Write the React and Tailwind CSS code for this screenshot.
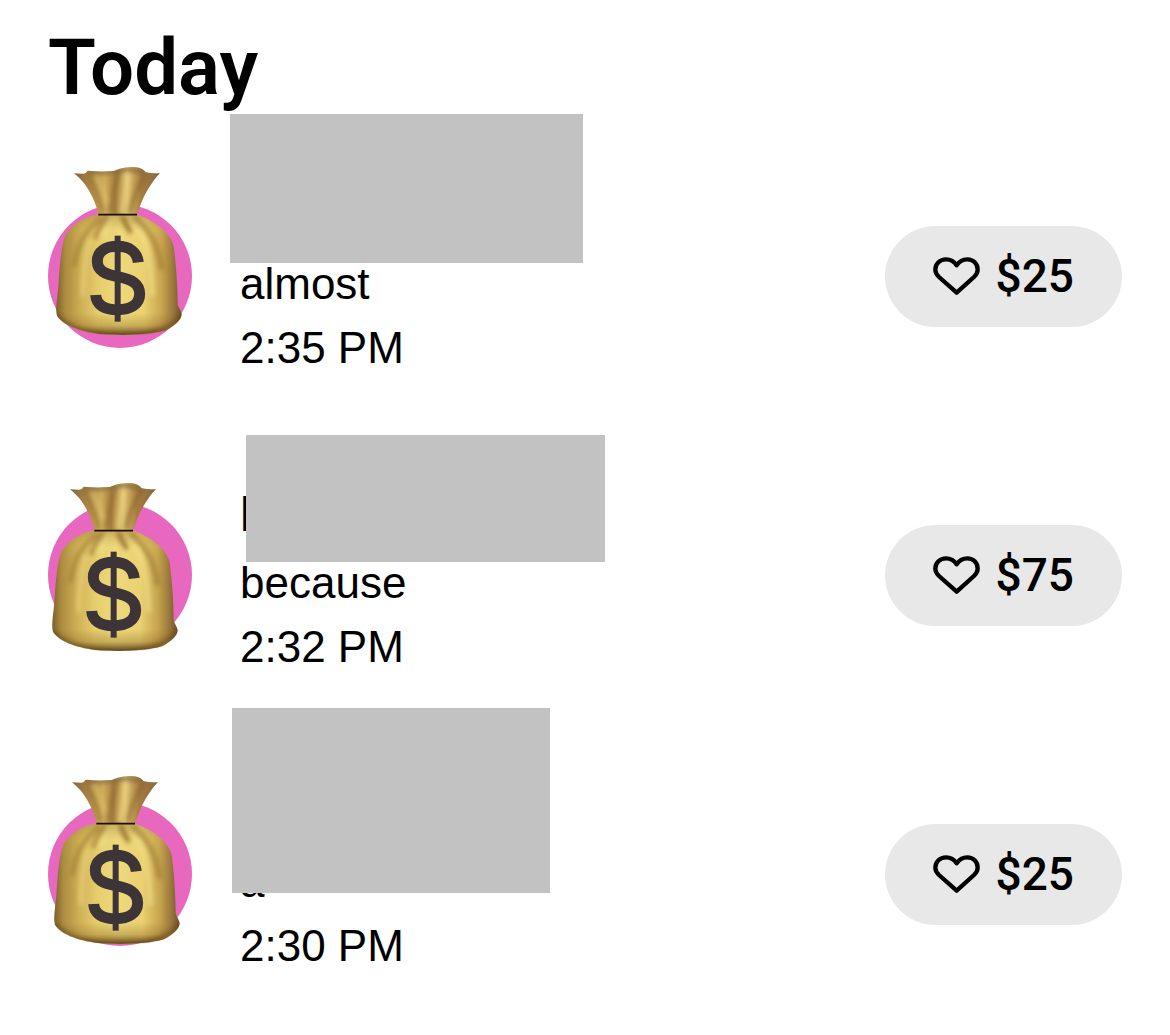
const payments = [
  {
    id: 1,
    name: '',
    note: 'almost',
    time: '2:35 PM',
    amount: '$25',
    bag: 'left-[8px] top-[-37px]',
    cover: 'left-[-10px] top-[-58px] w-[353px] h-[149px]',
  },
  {
    id: 2,
    name: 'l',
    note: 'because',
    time: '2:32 PM',
    amount: '$75',
    bag: 'left-[4px] top-[-20px]',
    cover: 'left-[6px] top-[-36px] w-[359px] h-[127px]',
  },
  {
    id: 3,
    name: '',
    note: 'a',
    time: '2:30 PM',
    amount: '$25',
    bag: 'left-[6px] top-[-26px]',
    cover: 'left-[-8px] top-[-62px] w-[318px] h-[185px]',
  },
];

const BODY =
  'M176 194 C138 200 96 222 76 256 C62 286 58 350 54 410 C51 450 44 478 50 498 C70 530 130 548 190 554 C250 558 330 556 376 542 C402 530 424 510 424 494 C423 482 413 474 412 462 C412 420 408 350 400 290 C390 250 348 216 288 194 Z';
const NECK =
  'M101 71 L128 72 Q136 73 142 63 Q170 66 200 65 Q222 66 238 57 Q262 50 290 53 Q308 56 316 68 Q340 72 359 70 C338 92 318 124 306 152 C298 172 294 184 289 195 L174 194 C170 172 160 148 148 126 Q130 94 101 71 Z';

function MoneyBag({ id, className }) {
  const body = `body-${id}`;
  const neck = `neck-${id}`;
  const shade = `shade-${id}`;
  const soft = `soft-${id}`;
  const clip = `clip-${id}`;
  const clipNeck = `clip-neck-${id}`;

  return (
    <svg viewBox="47 52 378 504" className={className} aria-hidden="true">
      <defs>
        <linearGradient id={body} x1="0" x2="1" y1="0" y2="0">
          <stop offset="0" stopColor="#7d6128" />
          <stop offset="0.07" stopColor="#ab8b40" />
          <stop offset="0.2" stopColor="#cfb056" />
          <stop offset="0.34" stopColor="#e6cd6c" />
          <stop offset="0.5" stopColor="#efd97c" />
          <stop offset="0.7" stopColor="#ead171" />
          <stop offset="0.84" stopColor="#c7a54e" />
          <stop offset="0.94" stopColor="#96743a" />
          <stop offset="1" stopColor="#6d4f20" />
        </linearGradient>
        <linearGradient id={neck} x1="0" x2="1" y1="0" y2="0">
          <stop offset="0" stopColor="#7f6238" />
          <stop offset="0.22" stopColor="#b18c48" />
          <stop offset="0.36" stopColor="#cfad5a" />
          <stop offset="0.48" stopColor="#a8813e" />
          <stop offset="0.62" stopColor="#dcbf6c" />
          <stop offset="0.78" stopColor="#a87d3e" />
          <stop offset="1" stopColor="#856844" />
        </linearGradient>
        <linearGradient id={shade} x1="0" x2="0" y1="0" y2="1">
          <stop offset="0" stopColor="#7a5420" stopOpacity="0.35" />
          <stop offset="0.14" stopColor="#a07a30" stopOpacity="0" />
          <stop offset="0.82" stopColor="#8a6526" stopOpacity="0" />
          <stop offset="0.92" stopColor="#8a6526" stopOpacity="0.35" />
          <stop offset="1" stopColor="#5a4218" stopOpacity="0.9" />
        </linearGradient>
        <filter id={soft} x="-50%" y="-20%" width="200%" height="140%">
          <feGaussianBlur stdDeviation="7" />
        </filter>
        <clipPath id={clip}>
          <path d={BODY} />
        </clipPath>
        <clipPath id={clipNeck}>
          <path d={NECK} />
        </clipPath>
      </defs>

      <path d={BODY} fill={`url(#${body})`} />
      <g clipPath={`url(#${clip})`}>
        <g filter={`url(#${soft})`} fill="none">
          <path d="M182 204 C150 232 112 268 102 350" stroke="#9c7834" strokeWidth="14" opacity="0.6" />
          <path d="M202 200 C184 220 172 240 164 268" stroke="#946d2e" strokeWidth="14" opacity="0.6" />
          <path d="M246 200 C252 218 262 232 272 250" stroke="#946d2e" strokeWidth="16" opacity="0.8" />
          <path d="M280 204 C318 232 352 270 364 360" stroke="#9c7834" strokeWidth="18" opacity="0.6" />
          <path d="M218 202 C206 224 198 240 190 266" stroke="#f3e08a" strokeWidth="12" opacity="0.8" />
          <path d="M278 220 C310 254 332 300 336 440" stroke="#f3e08a" strokeWidth="16" opacity="0.6" />
          <path d="M150 270 C136 310 128 360 128 440" stroke="#ecd47a" strokeWidth="16" opacity="0.6" />
          <path d="M50 500 C80 536 150 554 220 556 C300 560 380 550 424 500" stroke="#5a4018" strokeWidth="14" opacity="0.7" />
        </g>
      </g>
      <path d={BODY} fill={`url(#${shade})`} />

      <path d={NECK} fill={`url(#${neck})`} />
      <g clipPath={`url(#${clipNeck})`}>
        <g filter={`url(#${soft})`} fill="none">
          <path d="M140 70 C160 105 178 145 188 190" stroke="#8a672c" strokeWidth="10" opacity="0.6" />
          <path d="M236 64 C226 100 214 145 214 190" stroke="#85602c" strokeWidth="12" opacity="0.6" />
          <path d="M318 70 C300 100 276 145 268 190" stroke="#85602c" strokeWidth="12" opacity="0.6" />
          <path d="M262 72 C264 100 250 140 246 190" stroke="#efd686" strokeWidth="14" opacity="0.7" />
          <path d="M168 80 C178 100 192 130 200 160" stroke="#e3c673" strokeWidth="10" opacity="0.6" />
          <path d="M142 66 Q190 74 236 62 Q280 56 318 72" stroke="#806640" strokeWidth="12" opacity="0.8" />
        </g>
      </g>
      <path d="M174 195 H290" stroke="#15100a" strokeWidth="5" fill="none" />

      <g fill="none" stroke="#3c3436">
        <path
          d="M294 338 C290 306 266 290 232 290 C194 290 171 306 171 335 C171 364 194 373 232 381 C276 390 298 402 298 433 C298 464 270 480 232 480 C192 480 168 466 166 436"
          strokeWidth="33"
        />
        <path d="M232 258 V516" strokeWidth="18" />
      </g>
    </svg>
  );
}

function Heart() {
  return (
    <svg viewBox="191 142 141 117" className="h-[39px] w-[47px]" aria-hidden="true">
      <path
        d="M262 249 L209 202 C202 195 198 189 198 180 C198 162 212 149 230 149 C244 149 255 156 262 167 C269 156 280 149 294 149 C312 149 325 162 325 180 C325 189 321 195 314 202 Z"
        fill="none"
        stroke="#000"
        strokeWidth="13"
        strokeLinejoin="round"
      />
    </svg>
  );
}

function Payment({ payment }) {
  return (
    <li className="flex items-center gap-12">
      <div className="relative size-36 shrink-0 rounded-full bg-[#e868bf]">
        <MoneyBag
          id={payment.id}
          className={`absolute h-[168px] w-[126px] max-w-none ${payment.bag}`}
        />
      </div>

      <div className="relative flex-1 pt-2 text-[44px]">
        <h2 className="h-[72px] text-[48px] leading-[72px] font-medium">{payment.name}</h2>
        <p className="leading-[64px]">{payment.note}</p>
        <p className="leading-[64px]">{payment.time}</p>
        <div className={`absolute bg-[#c2c2c2] ${payment.cover}`} />
      </div>

      <button
        type="button"
        className="flex h-[101px] items-center gap-4 rounded-full bg-[#e8e8e8] px-12 font-[Roboto] text-[46px] font-medium"
      >
        <Heart />
        {payment.amount}
      </button>
    </li>
  );
}

function App() {
  return (
    <main className="bg-white px-12 pt-6 pb-14 font-['Liberation_Sans',Arial,sans-serif] text-black">
      <h1 className="font-[Roboto] text-[78px] leading-[88px] font-semibold">Today</h1>
      <ul className="mt-[60px] grid gap-[91px]">
        {payments.map((payment) => (
          <Payment key={payment.id} payment={payment} />
        ))}
      </ul>
    </main>
  );
}

export default App;
